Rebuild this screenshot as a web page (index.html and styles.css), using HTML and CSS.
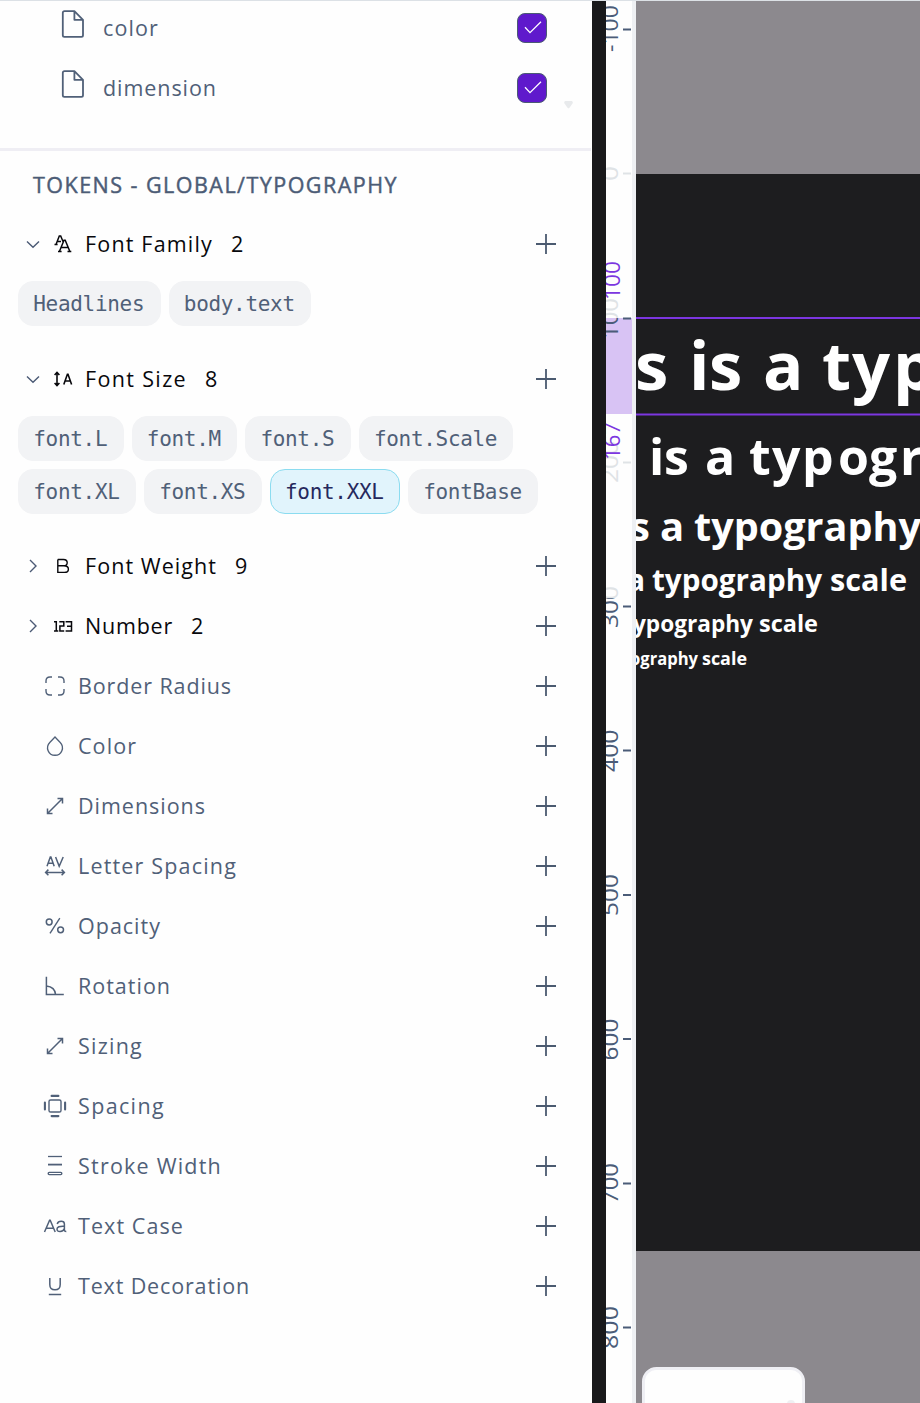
FILE: index.html
```html
<!DOCTYPE html>
<html lang="en">
<head>
<meta charset="utf-8">
<title>Design tokens</title>
<link rel="stylesheet" href="styles.css">
</head>
<body>
<svg class="defs" width="0" height="0">
  <symbol id="plus" viewBox="0 0 20 20"><path d="M10 0V20M0 10H20" stroke-width="1.8"/></symbol>
  <symbol id="file" viewBox="0 0 24 28"><path d="M3.5 1.2H13.4L22 9.8V25.2Q22 26.8 20.4 26.8H3.4Q1.8 26.8 1.8 25.2V2.8Q1.8 1.2 3.5 1.2ZM13.4 1.2V9.8H22" stroke-width="1.8" stroke-linejoin="round"/></symbol>
  <symbol id="check" viewBox="0 0 30 30"><path d="M8 14.3L13 19.6L24 8.7" stroke-width="1.3"/></symbol>
  <symbol id="down" viewBox="0 0 24 24"><path d="M6 9.5L12 15.3L18 9.5" stroke-width="1.4"/></symbol>
  <symbol id="right" viewBox="0 0 24 24"><path d="M9 6L15 12L9 18" stroke-width="1.4"/></symbol>
  <symbol id="family" viewBox="0 0 24 24"><path d="M5 12.5L8.3 4H9.7L12.2 10M3.5 12.5H6.6M5.8 9.5H10M8.4 19.5L13 8.2H14.2L18.9 19.5M7 19.5H10.6M16.5 19.5H20.3M10.2 15.6H17" stroke-width="1.5"/></symbol>
  <symbol id="size" viewBox="0 0 24 24"><path d="M6 5.5V18.5M3.6 8L6 5.5L8.4 8M3.6 16L6 18.5L8.4 16M12.8 17.5L16.4 7.3H17L20.6 17.5M14 14H19.4" stroke-width="1.6"/></symbol>
  <symbol id="weight" viewBox="0 0 24 24"><path d="M6.8 5.5H12.5Q16.2 5.5 16.2 8.8Q16.2 11.8 12.8 11.8H6.8M12.8 11.8Q17.4 11.8 17.4 15.2Q17.4 18.4 13.4 18.4H6.8V5.5" stroke-width="1.4"/></symbol>
  <symbol id="number" viewBox="0 0 24 24"><path d="M3 7.7H5.3V17M3 17H7.3M8.3 7.7H12.8V12H8.9V17H13.2M14.6 7.7H20.5V17H14.6M16 12.2H20.5" stroke-width="1.5"/></symbol>
  <symbol id="radius" viewBox="0 0 24 24"><path d="M3 9V7Q3 3 7 3H9M15 3H17Q21 3 21 7V9M21 15V17Q21 21 17 21H15M9 21H7Q3 21 3 17V15" stroke-width="1.4"/></symbol>
  <symbol id="drop" viewBox="0 0 24 24"><path d="M12 3L17.5 8.4C22.3 13.2 19.2 21.3 12 21.3S1.7 13.2 6.5 8.4Z" stroke-width="1.4" transform="translate(.6 0) scale(.95 1)"/></symbol>
  <symbol id="diag" viewBox="0 0 24 24"><path d="M4.5 19.5L19.5 4.5M14.5 4.5H19.5V9.5M4.5 14.5V19.5H9.5" stroke-width="1.5"/></symbol>
  <symbol id="letter" viewBox="0 0 24 24"><path d="M4 12.2L7.3 3H7.9L11.2 12.2M5.1 9.2H10.1M12.6 3L16.2 12.2L20.2 3M2.4 18.4H21.6M5.4 15.6L2.6 18.4L5.4 21.2M18.6 15.6L21.4 18.4L18.6 21.2" stroke-width="1.5"/></symbol>
  <symbol id="percent" viewBox="0 0 24 24"><circle cx="6.2" cy="8" r="2.9" stroke-width="1.5"/><circle cx="17.6" cy="15.8" r="2.9" stroke-width="1.5"/><path d="M16.8 4.2L7 19.4" stroke-width="1.4"/></symbol>
  <symbol id="angle" viewBox="0 0 24 24"><path d="M3.4 2.8V20.5H20.8M3.4 12Q12 13 12.6 20.5" stroke-width="1.5"/></symbol>
  <symbol id="space" viewBox="0 0 24 24"><rect x="6" y="6" width="12" height="12" rx="1.6" stroke-width="1.4"/><path d="M8.6 1.9H15.4M8.6 22.1H15.4M1.9 8.6V15.4M22.1 8.6V15.4" stroke-width="2.1" stroke-linecap="round"/></symbol>
  <symbol id="stroke" viewBox="0 0 24 24"><path d="M5 2.5H19" stroke-width="1.3"/><path d="M5 10.6H19" stroke-width="1.8"/><rect x="5.2" y="18.4" width="13.6" height="2.2" rx="1" stroke-width="1.4"/></symbol>
  <symbol id="case" viewBox="0 0 24 24"><path d="M1.5 18L6.6 6.2H7.2L12.2 18M3.2 14.2H10.5M14.2 10Q15 7.3 18.2 7.3Q21.4 7.3 21.4 10V16Q21.4 17.5 23.3 17.4M21.4 12.2Q14 11.8 14 15Q14 17.7 17.2 17.6Q20.5 17.4 21.4 14.5" stroke-width="1.5"/></symbol>
  <symbol id="under" viewBox="0 0 24 24"><path d="M6.8 4V10.4Q6.8 15.8 12 15.8Q17.2 15.8 17.2 10.4V4M5.8 20.5H18.2" stroke-width="1.5"/></symbol>
</svg>
<div class="app">
  <main class="panel">
    <div class="sets">
      <div class="set"><svg class="file"><use href="#file"/></svg><span class="fit" data-w="56">color</span><span class="box"><svg><use href="#check"/></svg></span></div>
      <div class="set"><svg class="file"><use href="#file"/></svg><span class="fit" data-w="114">dimension</span><span class="box"><svg><use href="#check"/></svg></span></div>
      <svg class="caret" viewBox="0 0 10 8"><path d="M1.5 0H8.5Q10 1 9 2.6L6 6.7Q5 8 4 6.7L1 2.6Q0 1 1.5 0Z"/></svg>
    </div>
    <h2 class="title"><span class="fit" data-w="365">TOKENS - GLOBAL/TYPOGRAPHY</span></h2>

    <div class="row open"><svg class="chev"><use href="#down"/></svg><svg class="icon"><use href="#family"/></svg><span class="fit" data-w="128">Font Family</span><span class="count">2</span><svg class="plus"><use href="#plus"/></svg></div>
    <div class="chips"><span class="chip">Headlines</span><span class="chip">body.text</span></div>

    <div class="row open"><svg class="chev"><use href="#down"/></svg><svg class="icon"><use href="#size"/></svg><span class="fit" data-w="102">Font Size</span><span class="count">8</span><svg class="plus"><use href="#plus"/></svg></div>
    <div class="chips last"><span class="chip">font.L</span><span class="chip">font.M</span><span class="chip">font.S</span><span class="chip">font.Scale</span><span class="chip">font.XL</span><span class="chip">font.XS</span><span class="chip active">font.XXL</span><span class="chip">fontBase</span></div>

    <div class="row open"><svg class="chev"><use href="#right"/></svg><svg class="icon"><use href="#weight"/></svg><span class="fit" data-w="132">Font Weight</span><span class="count">9</span><svg class="plus"><use href="#plus"/></svg></div>
    <div class="row open"><svg class="chev"><use href="#right"/></svg><svg class="icon"><use href="#number"/></svg><span class="fit" data-w="88">Number</span><span class="count">2</span><svg class="plus"><use href="#plus"/></svg></div>

    <div class="row"><svg class="icon"><use href="#radius"/></svg><span class="fit" data-w="154">Border Radius</span><svg class="plus"><use href="#plus"/></svg></div>
    <div class="row"><svg class="icon"><use href="#drop"/></svg><span class="fit" data-w="59">Color</span><svg class="plus"><use href="#plus"/></svg></div>
    <div class="row"><svg class="icon"><use href="#diag"/></svg><span class="fit" data-w="128">Dimensions</span><svg class="plus"><use href="#plus"/></svg></div>
    <div class="row"><svg class="icon"><use href="#letter"/></svg><span class="fit" data-w="159">Letter Spacing</span><svg class="plus"><use href="#plus"/></svg></div>
    <div class="row"><svg class="icon"><use href="#percent"/></svg><span class="fit" data-w="83">Opacity</span><svg class="plus"><use href="#plus"/></svg></div>
    <div class="row"><svg class="icon"><use href="#angle"/></svg><span class="fit" data-w="93">Rotation</span><svg class="plus"><use href="#plus"/></svg></div>
    <div class="row"><svg class="icon"><use href="#diag"/></svg><span class="fit" data-w="65">Sizing</span><svg class="plus"><use href="#plus"/></svg></div>
    <div class="row"><svg class="icon"><use href="#space"/></svg><span class="fit" data-w="87">Spacing</span><svg class="plus"><use href="#plus"/></svg></div>
    <div class="row"><svg class="icon"><use href="#stroke"/></svg><span class="fit" data-w="144">Stroke Width</span><svg class="plus"><use href="#plus"/></svg></div>
    <div class="row"><svg class="icon"><use href="#case"/></svg><span class="fit" data-w="106">Text Case</span><svg class="plus"><use href="#plus"/></svg></div>
    <div class="row"><svg class="icon"><use href="#under"/></svg><span class="fit" data-w="172">Text Decoration</span><svg class="plus"><use href="#plus"/></svg></div>
  </main>
  <div class="gutter"></div>
  <svg class="ruler" viewBox="606 0 30 1403">
    <defs>
      <clipPath id="fade"><path d="M600 185H640V318H600ZM600 420H640V598H600Z"/></clipPath>
      <clipPath id="solid"><path d="M600 0H640V120H600ZM600 318H640V415H600ZM600 598H640V1403H600Z"/></clipPath>
    </defs>
    <rect class="edge" x="632" y="0" width="4" height="1403"/>
    <rect class="span" x="606" y="318" width="26" height="96"/>
    <path class="ticks" d="M623 29.5H631M623 318.5H631M623 606.5H631M623 750.5H631M623 895H631M623 1039H631M623 1183.5H631M623 1327.5H631"/>
    <path class="ticks pale" d="M623 173.5H631M623 462.5H631"/>
    <g class="nums">
      <text transform="translate(617.5 52) rotate(-90)" textLength="47" lengthAdjust="spacingAndGlyphs">-100</text>
      <text class="pale" transform="translate(617.5 181) rotate(-90)" textLength="15" lengthAdjust="spacingAndGlyphs">0</text>
      <g clip-path="url(#fade)"><text class="pale" transform="translate(617.5 339) rotate(-90)" textLength="41" lengthAdjust="spacingAndGlyphs">100</text><text class="pale" transform="translate(617.5 483) rotate(-90)" textLength="42" lengthAdjust="spacingAndGlyphs">200</text><text class="pale" transform="translate(617.5 628) rotate(-90)" textLength="42" lengthAdjust="spacingAndGlyphs">300</text></g>
      <g clip-path="url(#solid)"><text transform="translate(617.5 339) rotate(-90)" textLength="41" lengthAdjust="spacingAndGlyphs">100</text><text transform="translate(617.5 628) rotate(-90)" textLength="42" lengthAdjust="spacingAndGlyphs">300</text></g>
      <text transform="translate(617.5 772) rotate(-90)" textLength="42.5" lengthAdjust="spacingAndGlyphs">400</text>
      <text transform="translate(617.5 916) rotate(-90)" textLength="42" lengthAdjust="spacingAndGlyphs">500</text>
      <text transform="translate(617.5 1060.5) rotate(-90)" textLength="42" lengthAdjust="spacingAndGlyphs">600</text>
      <text transform="translate(617.5 1204) rotate(-90)" textLength="41" lengthAdjust="spacingAndGlyphs">700</text>
      <text transform="translate(617.5 1349) rotate(-90)" textLength="43" lengthAdjust="spacingAndGlyphs">800</text>
      <text class="mark" transform="translate(619.5 300) rotate(-90)" textLength="39" lengthAdjust="spacingAndGlyphs">100</text>
      <text class="mark" transform="translate(619.5 460) rotate(-90)" textLength="38" lengthAdjust="spacingAndGlyphs">167</text>
    </g>
  </svg>
  <svg class="canvas" viewBox="636 0 284 1403">
    <rect class="board" x="636" y="174" width="284" height="1077"/>
    <g class="scale">
      <text y="390" font-size="67" x="635 689 709 763 822 852 893">sisatyp</text>
      <text y="475" font-size="50" x="649 664 705 749 772 802 838 869 900">isatypogr</text>
      <g font-size="40"><text x="630" y="541">s</text><text x="660" y="541">a</text><text x="694" y="541" textLength="227" lengthAdjust="spacingAndGlyphs">typography</text></g>
      <g font-size="30"><text x="627" y="591">a</text><text x="652" y="591" textLength="170" lengthAdjust="spacingAndGlyphs">typography</text><text x="830" y="591" textLength="77" lengthAdjust="spacingAndGlyphs">scale</text></g>
      <g font-size="23.5"><text x="633" y="631.5" textLength="120" lengthAdjust="spacingAndGlyphs">ypography</text><text x="759" y="631.5" textLength="59" lengthAdjust="spacingAndGlyphs">scale</text></g>
      <g font-size="18"><text x="630" y="664.5" textLength="68" lengthAdjust="spacingAndGlyphs">ography</text><text x="702" y="664.5" textLength="45" lengthAdjust="spacingAndGlyphs">scale</text></g>
    </g>
    <path class="guide" d="M636 318H920M636 414.5H920"/>
    <rect class="card" x="643.5" y="1368.5" width="160" height="60" rx="13"/>
    <circle class="dot" cx="791" cy="1404" r="4"/>
  </svg>
</div>
<script src="fit.js"></script>
</body>
</html>
```
FILE: styles.css
```css
* { box-sizing: border-box; }
body { margin: 0; font-family: "Open Sans", sans-serif; color: #506078; background: #fefefe; }
.defs { position: absolute; }
svg { fill: none; stroke: currentColor; flex: none; display: block; }
.app { position: relative; display: flex; width: 920px; height: 1403px; overflow: hidden; }
.app::before { content: ""; position: absolute; z-index: 2; left: 0; right: 0; top: 0; border-top: 1px solid #dce1e6; }
.panel { width: 592px; font-size: 21.5px; }
.gutter { width: 14px; background: #19191b; }
.ruler { width: 30px; height: 1403px; background: #fefefe; stroke: none; }
.canvas { width: 284px; height: 1403px; background: #8c898e; stroke: none; }

.sets { position: relative; width: 591px; height: 151px; border-bottom: 3px solid #efeef4; }
.set { display: flex; align-items: center; height: 60px; padding: 0 44px 0 61px; }
.set:first-child { height: 58px; padding-bottom: 2px; }
.set:nth-child(2) { padding-bottom: 0; }
.set .fit { margin-left: 18px; }
.file { width: 24px; height: 28px; margin-bottom: 8px; }
.box { width: 30px; height: 30px; margin-left: auto; border-radius: 8px; background: #5f19cc; border: 1px solid #4b5a75; color: #fff; }
.box svg { width: 30px; height: 30px; margin: -1px; }
.caret { position: absolute; left: 563px; top: 101px; width: 11px; height: 8px; fill: #e8eaec; stroke: none; }

.title { margin: 0; height: 63px; padding: 19px 0 0 33px; font-size: 21.5px; line-height: 30px; font-weight: 400; color: #4c5c76; -webkit-text-stroke: 0.45px #4c5c76; }
.fit { white-space: nowrap; line-height: 30px; }
.row { display: flex; align-items: center; height: 60px; padding: 0 36px 0 43px; }
.row .icon { width: 24px; height: 24px; margin-right: 11px; }
.row .plus { width: 20px; height: 20px; margin-left: auto; color: #4b5a70; }
.row.open { color: #08080c; padding-left: 21px; }
.row.open .icon { margin: 0 10px 0 6px; }
.chev { width: 24px; height: 24px; color: #4b5a75; }
.count { margin-left: 18px; line-height: 30px; }

.chips { display: flex; flex-wrap: wrap; gap: 8px; padding: 7px 40px 23px 18px; }
.chips.last { padding-bottom: 22px; }
.chip { height: 45px; padding: 1px 15.3px 0 14.3px; border: 1px solid #f2f3f5; border-radius: 15px; background: #f2f3f5; font: 21px/43px "DejaVu Sans Mono", monospace; letter-spacing: -0.32px; }
.chip.active { background: #e1f4fc; border-color: #8bdcf0; color: #25285c; }

.edge { fill: #eef0f3; }
.span { fill: #d8c3f4; }
.ticks { stroke: #4b5c78; stroke-width: 2; }
.ticks.pale { stroke: #dfe3e6; }
.nums { font-size: 21.5px; fill: #4b5c78; }
.nums .pale { fill: #dfe3e6; }
.nums .mark { fill: #7c36e0; }
.board { fill: #1d1d1f; }
.scale { fill: #fff; font-weight: 700; }
.guide { stroke: #7c36e0; stroke-width: 2; }
.card { fill: #fefefe; stroke: #efeff4; stroke-width: 3; }
.dot { fill: #efeff2; }
```
FILE: fit.js
```js
document.querySelectorAll('.fit').forEach(function (el) {
  var target = parseFloat(el.dataset.w);
  var natural = el.getBoundingClientRect().width;
  el.style.letterSpacing = ((target - natural) / el.textContent.length).toFixed(3) + 'px';
});
```
